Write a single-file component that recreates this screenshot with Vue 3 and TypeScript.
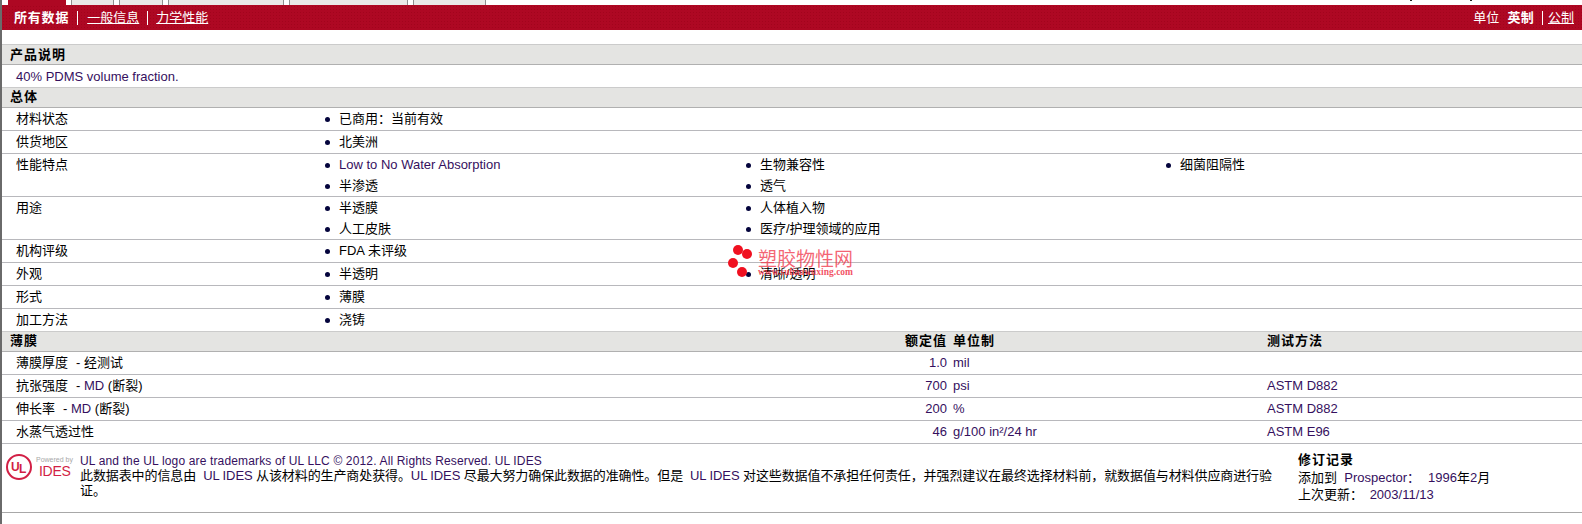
<script setup lang="ts">
interface Row { label: string; h: number; cols: { t: string; latin?: boolean }[][] }
const tabs = [43, 44, 116, 119, 73]
const general: Row[] = [
  { label: '材料状态', h: 23, cols: [[{ t: '已商用：当前有效' }]] },
  { label: '供货地区', h: 23, cols: [[{ t: '北美洲' }]] },
  { label: '性能特点', h: 43, cols: [
    [{ t: 'Low to No Water Absorption', latin: true }, { t: '半渗透' }],
    [{ t: '生物兼容性' }, { t: '透气' }],
    [{ t: '细菌阻隔性' }],
  ] },
  { label: '用途', h: 43, cols: [
    [{ t: '半透膜' }, { t: '人工皮肤' }],
    [{ t: '人体植入物' }, { t: '医疗/护理领域的应用' }],
  ] },
  { label: '机构评级', h: 23, cols: [[{ t: 'FDA 未评级' }]] },
  { label: '外观', h: 23, cols: [[{ t: '半透明' }], [{ t: '清晰/透明' }]] },
  { label: '形式', h: 23, cols: [[{ t: '薄膜' }]] },
  { label: '加工方法', h: 23, cols: [[{ t: '浇铸' }]] },
]
const film = [
  { name: '薄膜厚度', note: 'test', val: '1.0', unit: 'mil', test: '' },
  { name: '抗张强度', note: 'md', val: '700', unit: 'psi', test: 'ASTM D882' },
  { name: '伸长率', note: 'md', val: '200', unit: '%', test: 'ASTM D882' },
  { name: '水蒸气透过性', note: '', val: '46', unit: 'g/100 in²/24 hr', test: 'ASTM E96' },
]
</script>

<template>
  <div class="page">
    <div class="tabs">
      <div class="tab active"></div>
      <div v-for="(w, i) in tabs" :key="i" class="tab" :style="{ width: w + 'px' }"></div>
    </div>
    <span class="tick t1"></span><span class="tick t2"></span>
    <div class="bar">
      <div class="nav main">
        <b>所有数据</b><i></i><a>一般信息</a><i></i><a>力学性能</a>
      </div>
      <div class="nav units">
        <span>单位</span><b>英制</b><i></i><a>公制</a>
      </div>
    </div>
    <div class="section first"><b>产品说明</b></div>
    <div class="desc latin">40% PDMS volume fraction.</div>
    <div class="section"><b>总体</b></div>
    <div v-for="r in general" :key="r.label" class="row" :style="{ height: r.h + 'px' }">
      <div class="label">{{ r.label }}</div>
      <div v-for="(c, ci) in r.cols" :key="ci" class="col">
        <div v-for="item in c" :key="item.t" class="item">
          <span class="dot"></span><span :class="{ latin: item.latin }">{{ item.t }}</span>
        </div>
      </div>
    </div>
    <div class="section film-head">
      <b class="fname">薄膜</b><b class="fval">额定值</b><b class="funit">单位制</b><b class="ftest">测试方法</b>
    </div>
    <div v-for="f in film" :key="f.name" class="frow">
      <div class="fname">{{ f.name }}<span v-if="f.note === 'test'" class="note">- 经测试</span><span v-else-if="f.note === 'md'" class="note">- <span class="latin">MD</span> (断裂)</span></div>
      <div class="fval latin">{{ f.val }}</div>
      <div class="funit latin">{{ f.unit }}</div>
      <div class="ftest latin">{{ f.test }}</div>
    </div>
    <div class="footer">
      <svg class="logo" width="72" height="36" viewBox="0 0 72 36">
        <circle cx="15" cy="18" r="12" fill="none" stroke="#d21f45" stroke-width="2" />
        <text x="7" y="22" class="ul">U</text>
        <text x="15" y="24" class="ul">L</text>
        <text x="32" y="13" class="pow">Powered by</text>
        <text x="35" y="27" class="ides">IDES</text>
      </svg>
      <div class="legal">
        <div class="latin small">UL and the UL logo are trademarks of UL LLC © 2012. All Rights Reserved. UL IDES</div>
        <div class="notice">此数据表中的信息由 <span class="latin">&nbsp;UL IDES</span> 从该材料的生产商处获得。<span class="latin">UL IDES</span> 尽最大努力确保此数据的准确性。但是 <span class="latin">&nbsp;UL IDES</span> 对这些数据值不承担任何责任，并强烈建议在最终选择材料前，就数据值与材料供应商进行验证。</div>
      </div>
      <div class="history">
        <b>修订记录</b>
        <div>添加到 <span class="latin">&nbsp;Prospector：</span><span class="latin added">1996</span>年<span class="latin">2</span>月</div>
        <div>上次更新： <span class="latin updated">2003/11/13</span></div>
      </div>
    </div>
    <div class="mark">
      <span class="c c1"></span><span class="c c2"></span><span class="c c3"></span><span class="c c4"></span>
      <span class="mt">塑胶物性网</span>
      <span class="mu">www.suliaowuxing.com</span>
    </div>
  </div>
</template>

<style scoped>
.page {
  position: relative;
  width: 1582px;
  height: 524px;
  box-sizing: border-box;
  border-left: 2px solid #6a6a6a;
  overflow: hidden;
  background: #fff;
  color: #000;
  font: 13px/16px "Liberation Sans", "Noto Sans CJK SC", sans-serif;
}
.latin { color: #35105e; }
.small { font-size: 12px; letter-spacing: 0.15px; line-height: 14px; }
.notice { letter-spacing: -0.1px; }
.tabs { display: flex; gap: 5px; height: 5px; padding-left: 6px; }
.tab { box-sizing: border-box; height: 5px; background: #e9e9e7; border: 1px solid #8f8f8f; border-top: 0; border-bottom: 0; }
.tab.active { width: 58px; background: #ae0823; border: 0; }
.tick { position: absolute; top: 0; width: 2px; height: 1px; background: #222; }
.t1 { left: 1408px; }
.t2 { left: 1468px; }
.bar {
  display: flex;
  justify-content: space-between;
  align-items: center;
  height: 25px;
  padding: 0 8px 0 12px;
  color: #fff;
  background-color: #ae0823;
  background-image: radial-gradient(#a2041c 0.6px, transparent 0.7px);
  background-size: 3px 3px;
}
.nav { display: flex; align-items: center; }
.nav b { letter-spacing: 0.8px; }
.nav i { width: 1px; height: 14px; background: #fff; margin: 0 8px; }
.main i:first-of-type { margin-right: 9px; }
.nav a { text-decoration: underline; }
.units b { letter-spacing: 0.3px; }
.units span { margin-right: 8px; }
.units i { margin: 0 5px 0 8px; }
.section {
  box-sizing: border-box;
  height: 21px;
  padding-left: 8px;
  padding-bottom: 1px;
  display: flex;
  align-items: center;
  background: #e4e4e2;
  border-top: 1px solid #cbcbcb;
  border-bottom: 1px solid #b0b0b0;
}
.section b { letter-spacing: 1px; }
.first { margin-top: 14px; padding-bottom: 0; }
.desc { box-sizing: border-box; height: 22px; padding: 1px 0 0 14px; line-height: 22px; }
.row {
  box-sizing: border-box;
  display: grid;
  grid-template-columns: 321px 421px 420px 1fr;
  padding-top: 3px;
  border-bottom: 1px solid #b8b8bc;
}
.label { padding-left: 14px; }
.col { display: flex; flex-direction: column; gap: 5px; }
.item { display: flex; align-items: center; height: 16px; }
.dot { width: 5px; height: 5px; margin: 0 9px 0 2px; flex: none; border-radius: 50%; background: #04043c; }
.film-head { display: grid; grid-template-columns: 877px 60px 320px 1fr; margin-top: -1px; }
.fval { text-align: right; }
.funit { padding-left: 6px; }
.frow {
  box-sizing: border-box;
  display: grid;
  grid-template-columns: 885px 60px 320px 1fr;
  height: 23px;
  align-items: center;
  border-bottom: 1px solid #b8b8bc;
}
.frow .fname { padding-left: 14px; }
.note { margin-left: 8px; }
.footer {
  box-sizing: border-box;
  display: flex;
  align-items: flex-start;
  height: 69px;
  border-bottom: 1px solid #a8a8a8;
  padding-top: 5px;
}
.logo { flex: none; margin: 0 4px 0 2px; }
.ul { font: bold 12px "Liberation Sans", sans-serif; fill: #d21f45; }
.pow { font: 7px "Liberation Sans", sans-serif; fill: #a8a8a8; }
.ides { font: 14px "Liberation Sans", sans-serif; fill: #d21f45; letter-spacing: -0.3px; }
.legal { width: 1196px; margin-top: 5px; line-height: 15px; }
.history { margin-left: 22px; padding-top: 2px; line-height: 17.5px; }
.history b { letter-spacing: 1px; }
.added { margin-left: 8px; }
.updated { margin-left: 3px; }
.mark { position: absolute; left: 718px; top: 240px; width: 140px; height: 40px; pointer-events: none; }
.c { position: absolute; width: 10px; height: 10px; border-radius: 50%; background: #f01020; }
.c1 { left: 13px; top: 5px; }
.c2 { left: 22px; top: 9px; }
.c3 { left: 8px; top: 18px; }
.c4 { left: 17px; top: 27px; }
.mt { position: absolute; left: 38px; top: 9px; font-size: 19px; line-height: 22px; color: rgba(240, 50, 70, 0.75); white-space: nowrap; }
.mu { position: absolute; left: 38px; top: 27px; font: bold 9.5px/11px "Liberation Serif", serif; color: rgba(240, 50, 70, 0.85); white-space: nowrap; }
</style>
